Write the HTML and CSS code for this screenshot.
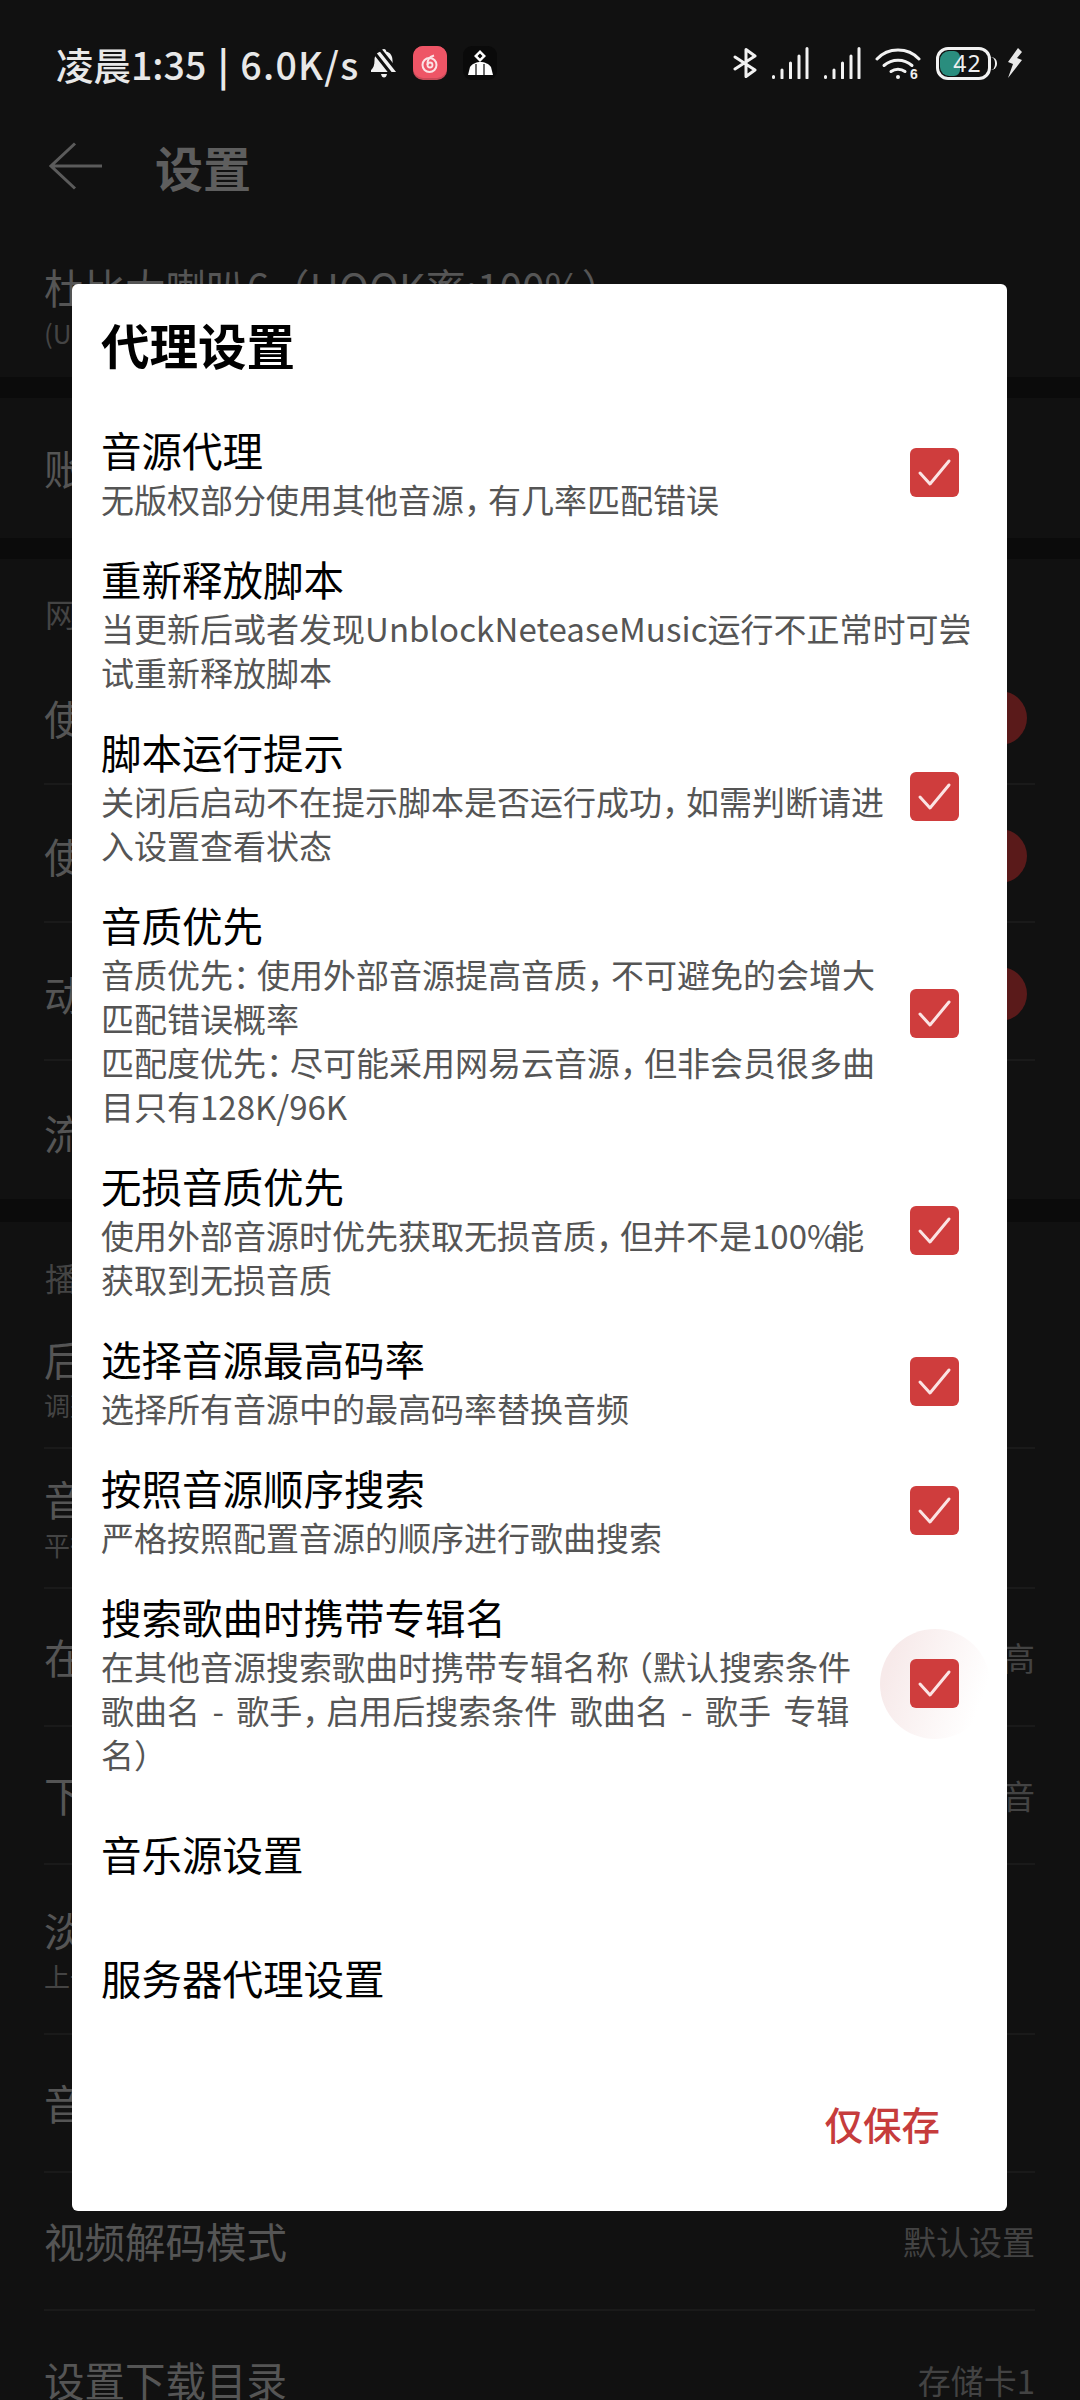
FILE: index.html
```html
<!DOCTYPE html>
<html lang="zh-CN">
<head>
    <meta charset="UTF-8">
    <title>代理设置</title>
    <link rel="stylesheet" href="styles.css">
</head>
<body>

    <div class="screen">
        <div class="status-bar">
            <div class="status-left">
                <span class="status-text">凌晨1:35 <span class="sep">|</span> <span class="speed">6.0K/s</span></span>
                <svg class="ic-bell" viewBox="0 0 27 30"><path d="M14 1c1.400 0 2.200 1 2.200 2.400 4.300 1 6.300 4.500 6.300 9 0 4.500 1 6.800 3.500 9.300v2.300H1v-1.800c2.500-2.500 3.500-5.300 3.500-9.800 0-4.500 2-8 6.300-9C10.800 2 12.600 1 14 1z" fill="#f2f2f2"/><path d="M11 26h6c-.5 2.500-1.500 3.500-3 3.500s-2.500-1-3-3.500z" fill="#f2f2f2"/><path d="M3 3l19 24M9 0l19 24" stroke="#111" stroke-width="3"/></svg>
                <svg class="ic-app" viewBox="0 0 34 34"><rect width="34" height="34" rx="10" fill="#c94a58"/><rect width="34" height="32" rx="10" fill="#ee5566"/><circle cx="16.500" cy="19" r="7" fill="none" stroke="#fbe3e6" stroke-width="2"/><circle cx="17" cy="19" r="2.500" fill="none" stroke="#fbe3e6" stroke-width="1.800"/><path d="M14.500 19c-.5-4 1.500-8 6.500-9.500" fill="none" stroke="#fbe3e6" stroke-width="2"/></svg>
                <svg class="ic-app" viewBox="0 0 34 34"><rect width="34" height="34" rx="9" fill="#0a0a0a"/><path d="M17 4l6 6-6 6-6-6zM17 7.500L14.500 10l2.500 2.500 2.500-2.500z" fill="#fff" fill-rule="evenodd"/><path d="M17 16c5 0 9 2 11 5l2 8H5l2-8c2-3 6-5 11-5z" fill="#fff"/><path d="M13 18v12M21 18v12" stroke="#0a0a0a" stroke-width="1.200"/></svg>
            </div>
            <div class="status-right">
                <svg class="ic-bt" viewBox="0 0 25 30"><path d="M2 9l20 13-9 6.500V1.500L22 8 2 21" fill="none" stroke="#f2f2f2" stroke-width="3" stroke-linejoin="round" stroke-linecap="round"/></svg>
                <svg class="ic-signal" viewBox="0 0 38 32"><path d="M2.500 29.500v1M11 23v8M19.500 16v15M28 9v22M36 1.500v29.500" stroke="#f2f2f2" stroke-width="3" stroke-linecap="round" fill="none"/></svg>
                <svg class="ic-signal" viewBox="0 0 38 32"><path d="M2.500 29.500v1M11 23v8M19.500 16v15M28 9v22M36 1.500v29.500" stroke="#f2f2f2" stroke-width="3" stroke-linecap="round" fill="none"/></svg>
                <svg class="ic-wifi" viewBox="0 0 46 32"><g fill="none" stroke="#f2f2f2" stroke-width="3" stroke-linecap="round"><path d="M2 12C13 0 33 0 44 12"/><path d="M9 18.500c8-7 20-7 28 0"/><path d="M16 24.500c4-3 10-3 14 0"/></g><circle cx="23" cy="30" r="2" fill="#f2f2f2"/><text x="35" y="32" class="wifi-six">6</text></svg>
                <div class="battery">
                    <div class="battery-fill"></div>
                    <span class="battery-num">42</span>
                </div>
                <svg class="ic-bolt" viewBox="0 0 16 30"><path d="M11 0L1 14l5 2-5 14L15 12l-5-2 5-6z" fill="#e8e8e8"/></svg>
            </div>
        </div>

        <div class="topbar">
            <svg class="ic-back" viewBox="0 0 54 48"><path d="M26 1.500L2 24l24 22.500M2 24h51" fill="none" stroke="#5b5b5b" stroke-width="3"/></svg>
            <span class="topbar-title">设置</span>
        </div>

        <div class="setting-row first">
            <div>
                <div class="row-title">杜比大喇叭6（HOOK率:100%）</div>
                <div class="row-sub">(UI版本)</div>
            </div>
        </div>
        <div class="band"></div>
        <div class="setting-row account"><div class="row-title">账号</div></div>
        <div class="band"></div>

        <div class="group-head net">网络</div>
        <div class="setting-row line net-row"><div class="row-title">使用移动网络播放</div><span class="toggle"></span></div>
        <div class="setting-row line net-row"><div class="row-title">使用移动网络下载</div><span class="toggle"></span></div>
        <div class="setting-row line net-row"><div class="row-title">动态页中使用</div><span class="toggle"></span></div>
        <div class="setting-row net-row"><div class="row-title">流量提醒</div></div>
        <div class="band low"></div>

        <div class="group-head play">播放</div>
        <div class="setting-row line sub-row"><div><div class="row-title">后台播放</div><div class="row-sub">调整后台</div></div></div>
        <div class="setting-row line sub-row"><div><div class="row-title">音量均衡</div><div class="row-sub">平衡音量</div></div></div>
        <div class="setting-row line"><div class="row-title">在线播放音质</div><span class="row-value">高</span></div>
        <div class="setting-row line"><div class="row-title">下载音质</div><span class="row-value">音</span></div>
        <div class="setting-row line tall"><div><div class="row-title">淡入淡出</div><div class="row-sub">上一首</div></div></div>
        <div class="setting-row line"><div class="row-title">音效设置</div></div>
        <div class="setting-row line"><div class="row-title">视频解码模式</div><span class="row-value">默认设置</span></div>
        <div class="setting-row"><div class="row-title">设置下载目录</div><span class="row-value">存储卡1</span></div>

        <div class="dialog">
            <h1 class="dialog-title">代理设置</h1>

            <div class="item">
                <div class="item-text">
                    <div class="item-name">音源代理</div>
                    <div class="item-desc">无版权部分使用其他音源<span class="punct">，</span>有几率匹配错误</div>
                </div>
                <span class="check"><svg viewBox="0 0 49 49"><path d="M10 25l10 11 19-23" /></svg></span>
            </div>
            <div class="item">
                <div class="item-text wide">
                    <div class="item-name">重新释放脚本</div>
                    <div class="item-desc">当更新后或者发现<span class="latin">UnblockNeteaseMusic</span>运行不正常时可尝<br>试重新释放脚本</div>
                </div>
            </div>
            <div class="item">
                <div class="item-text">
                    <div class="item-name">脚本运行提示</div>
                    <div class="item-desc">关闭后启动不在提示脚本是否运行成功<span class="punct">，</span>如需判断请进<br>入设置查看状态</div>
                </div>
                <span class="check"><svg viewBox="0 0 49 49"><path d="M10 25l10 11 19-23" /></svg></span>
            </div>
            <div class="item">
                <div class="item-text">
                    <div class="item-name">音质优先</div>
                    <div class="item-desc">音质优先<span class="punct">：</span>使用外部音源提高音质<span class="punct">，</span>不可避免的会增大<br>匹配错误概率<br>匹配度优先<span class="punct">：</span>尽可能采用网易云音源<span class="punct">，</span>但非会员很多曲<br>目只有128K/96K</div>
                </div>
                <span class="check"><svg viewBox="0 0 49 49"><path d="M10 25l10 11 19-23" /></svg></span>
            </div>
            <div class="item">
                <div class="item-text">
                    <div class="item-name">无损音质优先</div>
                    <div class="item-desc">使用外部音源时优先获取无损音质<span class="punct">，</span>但并不是100<span class="pct">%</span>能<br>获取到无损音质</div>
                </div>
                <span class="check"><svg viewBox="0 0 49 49"><path d="M10 25l10 11 19-23" /></svg></span>
            </div>
            <div class="item">
                <div class="item-text">
                    <div class="item-name">选择音源最高码率</div>
                    <div class="item-desc">选择所有音源中的最高码率替换音频</div>
                </div>
                <span class="check"><svg viewBox="0 0 49 49"><path d="M10 25l10 11 19-23" /></svg></span>
            </div>
            <div class="item">
                <div class="item-text">
                    <div class="item-name">按照音源顺序搜索</div>
                    <div class="item-desc">严格按照配置音源的顺序进行歌曲搜索</div>
                </div>
                <span class="check"><svg viewBox="0 0 49 49"><path d="M10 25l10 11 19-23" /></svg></span>
            </div>
            <div class="item">
                <div class="item-text">
                    <div class="item-name">搜索歌曲时携带专辑名</div>
                    <div class="item-desc">在其他音源搜索歌曲时携带专辑名称<span class="punct open">（</span>默认搜索条件<br>歌曲名 - 歌手<span class="punct">，</span>启用后搜索条件 歌曲名 - 歌手 专辑<br>名<span class="punct">）</span></div>
                </div>
                <span class="check-wrap">
                    <span class="ripple"></span>
                    <span class="check"><svg viewBox="0 0 49 49"><path d="M10 25l10 11 19-23" /></svg></span>
                </span>
            </div>

            <div class="link-item">音乐源设置</div>
            <div class="link-item">服务器代理设置</div>

            <div class="dialog-actions">
                <span class="save-btn">仅保存</span>
            </div>
        </div>
    </div>

</body>
</html>
```

FILE: styles.css
```css
html, body {
    margin: 0;
    padding: 0;
    background-color: #111111;
}

.screen {
    position: relative;
    width: 1080px;
    height: 2400px;
    overflow: hidden;
    background-color: #111111;
    font-family: "Noto Sans CJK SC", "Noto Sans", sans-serif;
    color: #555555;
}

.status-bar {
    height: 126px;
    padding: 0 55px 0 56px;
    box-sizing: border-box;
    display: flex;
    justify-content: space-between;
    align-items: center;
}

.status-left, .status-right {
    display: flex;
    align-items: center;
}

.status-text {
    font-size: 37.500px;
    font-weight: 500;
    word-spacing: 3px;
    color: #e8e8e8;
    margin-right: 10px;
    white-space: nowrap;
}

.sep {
    font-weight: 700;
}

.speed {
    letter-spacing: 1.300px;
}

.ic-bell {
    width: 27px;
    height: 30px;
    margin-right: 16px;
}

.ic-app {
    width: 34px;
    height: 34px;
    margin-right: 16px;
}

.ic-bt {
    width: 25px;
    height: 30px;
    margin-right: 13px;
}

.ic-signal {
    width: 38px;
    height: 32px;
    margin-right: 14px;
}

.ic-wifi {
    width: 46px;
    height: 32px;
    margin-right: 15px;
}

.wifi-six {
    font-size: 14px;
    font-weight: 700;
    fill: #eee;
    font-family: "Liberation Sans", sans-serif;
}

.battery {
    position: relative;
    width: 55px;
    height: 33px;
    box-sizing: border-box;
    border: 3px solid #f2f2f2;
    border-radius: 12px;
    margin-right: 16px;
    display: flex;
    align-items: center;
    justify-content: center;
}

.battery::after {
    content: "";
    position: absolute;
    right: -9px;
    top: 7px;
    width: 4px;
    height: 13px;
    border-right: 2px solid #f2f2f2;
    border-radius: 0 6px 6px 0;
}

.battery-fill {
    position: absolute;
    left: 1px;
    top: 1px;
    bottom: 1px;
    width: 20px;
    background-color: #2a8d7e;
    border-radius: 9px 6px 6px 9px;
}

.battery-num {
    position: relative;
    left: 4px;
    font-size: 23px;
    line-height: 26px;
    letter-spacing: 1px;
    color: #eeeeee;
    font-family: "Noto Sans", sans-serif;
}

.ic-bolt {
    width: 16px;
    height: 30px;
    margin-right: 2px;
}

.topbar {
    height: 84px;
    box-sizing: border-box;
    padding: 0 0 4px 49px;
    display: flex;
    align-items: center;
}

.ic-back {
    width: 54px;
    height: 48px;
    margin-right: 52px;
}

.topbar-title {
    font-size: 48px;
    font-weight: 700;
    color: #5e5e5e;
}

.setting-row {
    height: 138px;
    margin: 0 45px 0 44px;
    box-sizing: border-box;
    display: flex;
    justify-content: space-between;
    align-items: center;
}

.setting-row.first {
    height: 167px;
    padding-top: 24px;
}

.setting-row.account {
    height: 140px;
}

.setting-row.net-row {
    padding-top: 5px;
}

.line {
    border-bottom: 2px solid #1a1a1a;
}

.row-title {
    font-size: 40.500px;
    line-height: 54px;
    color: #555555;
    white-space: nowrap;
}

.row-sub {
    font-size: 26px;
    line-height: 38px;
    color: #444444;
    white-space: nowrap;
}

.row-value {
    font-size: 33px;
    color: #434343;
    white-space: nowrap;
}

.setting-row.sub-row {
    height: 140px;
}

.setting-row.tall {
    height: 170px;
}

.band {
    height: 21px;
    background-color: #0b0b0b;
}

.band.low {
    height: 23px;
}

.group-head {
    font-size: 32px;
    color: #444444;
    margin-left: 45px;
}

.group-head.net {
    height: 88px;
    line-height: 108px;
}

.group-head.play {
    height: 87px;
    line-height: 110px;
}

.toggle {
    margin-right: 8px;
    width: 54px;
    height: 54px;
    border-radius: 50%;
    background-color: #5a1a1a;
}

/* dialog lies over the settings page */
.dialog {
    position: absolute;
    left: 72px;
    top: 284px;
    width: 935px;
    height: 1927px;
    box-sizing: border-box;
    padding-left: 29px;
    background-color: #ffffff;
    border-radius: 6px;
    color: #000000;
}

.dialog-title {
    margin: 0;
    height: 124px;
    padding-top: 27px;
    box-sizing: border-box;
    font-size: 48.500px;
    line-height: 66px;
    font-weight: 700;
    color: #000000;
}

.item {
    display: flex;
    align-items: center;
    padding: 15px 0 16px;
}

.item-text {
    width: 809px;
}

.item-text.wide {
    width: 881px;
}

.item-name {
    font-size: 40.500px;
    line-height: 54px;
    color: #000000;
}

.item-desc {
    font-size: 33px;
    line-height: 44px;
    word-spacing: 5px;
    color: #555555;
    white-space: nowrap;
}

.latin {
    letter-spacing: 0.100px;
}

.pct {
    letter-spacing: -6px;
}

/* the phone font has narrower full-width punctuation */
.punct {
    display: inline-block;
    width: 24px;
}

.punct.open {
    margin-left: -9px;
    width: 33px;
}

.check {
    position: relative;
    display: block;
    width: 49px;
    height: 49px;
    background-color: #cf3d3d;
    border-radius: 6px;
}

.check svg {
    display: block;
    width: 49px;
    height: 49px;
}

.check path {
    fill: none;
    stroke: #fbe4e4;
    stroke-width: 3;
    stroke-linecap: round;
    stroke-linejoin: round;
}

.check-wrap {
    position: relative;
    display: block;
}

.ripple {
    position: absolute;
    left: -30px;
    top: -30px;
    width: 110px;
    height: 110px;
    border-radius: 50%;
    background: linear-gradient(110deg, #f7eaea 15%, #ffffff 85%);
}

.link-item {
    height: 124px;
    font-size: 40.500px;
    line-height: 124px;
    color: #000000;
}

.dialog-actions {
    display: flex;
    justify-content: flex-end;
    padding: 53px 67px 0 0;
}

.save-btn {
    font-size: 38.500px;
    line-height: 60px;
    font-weight: 500;
    color: #c63c3c;
}
```
